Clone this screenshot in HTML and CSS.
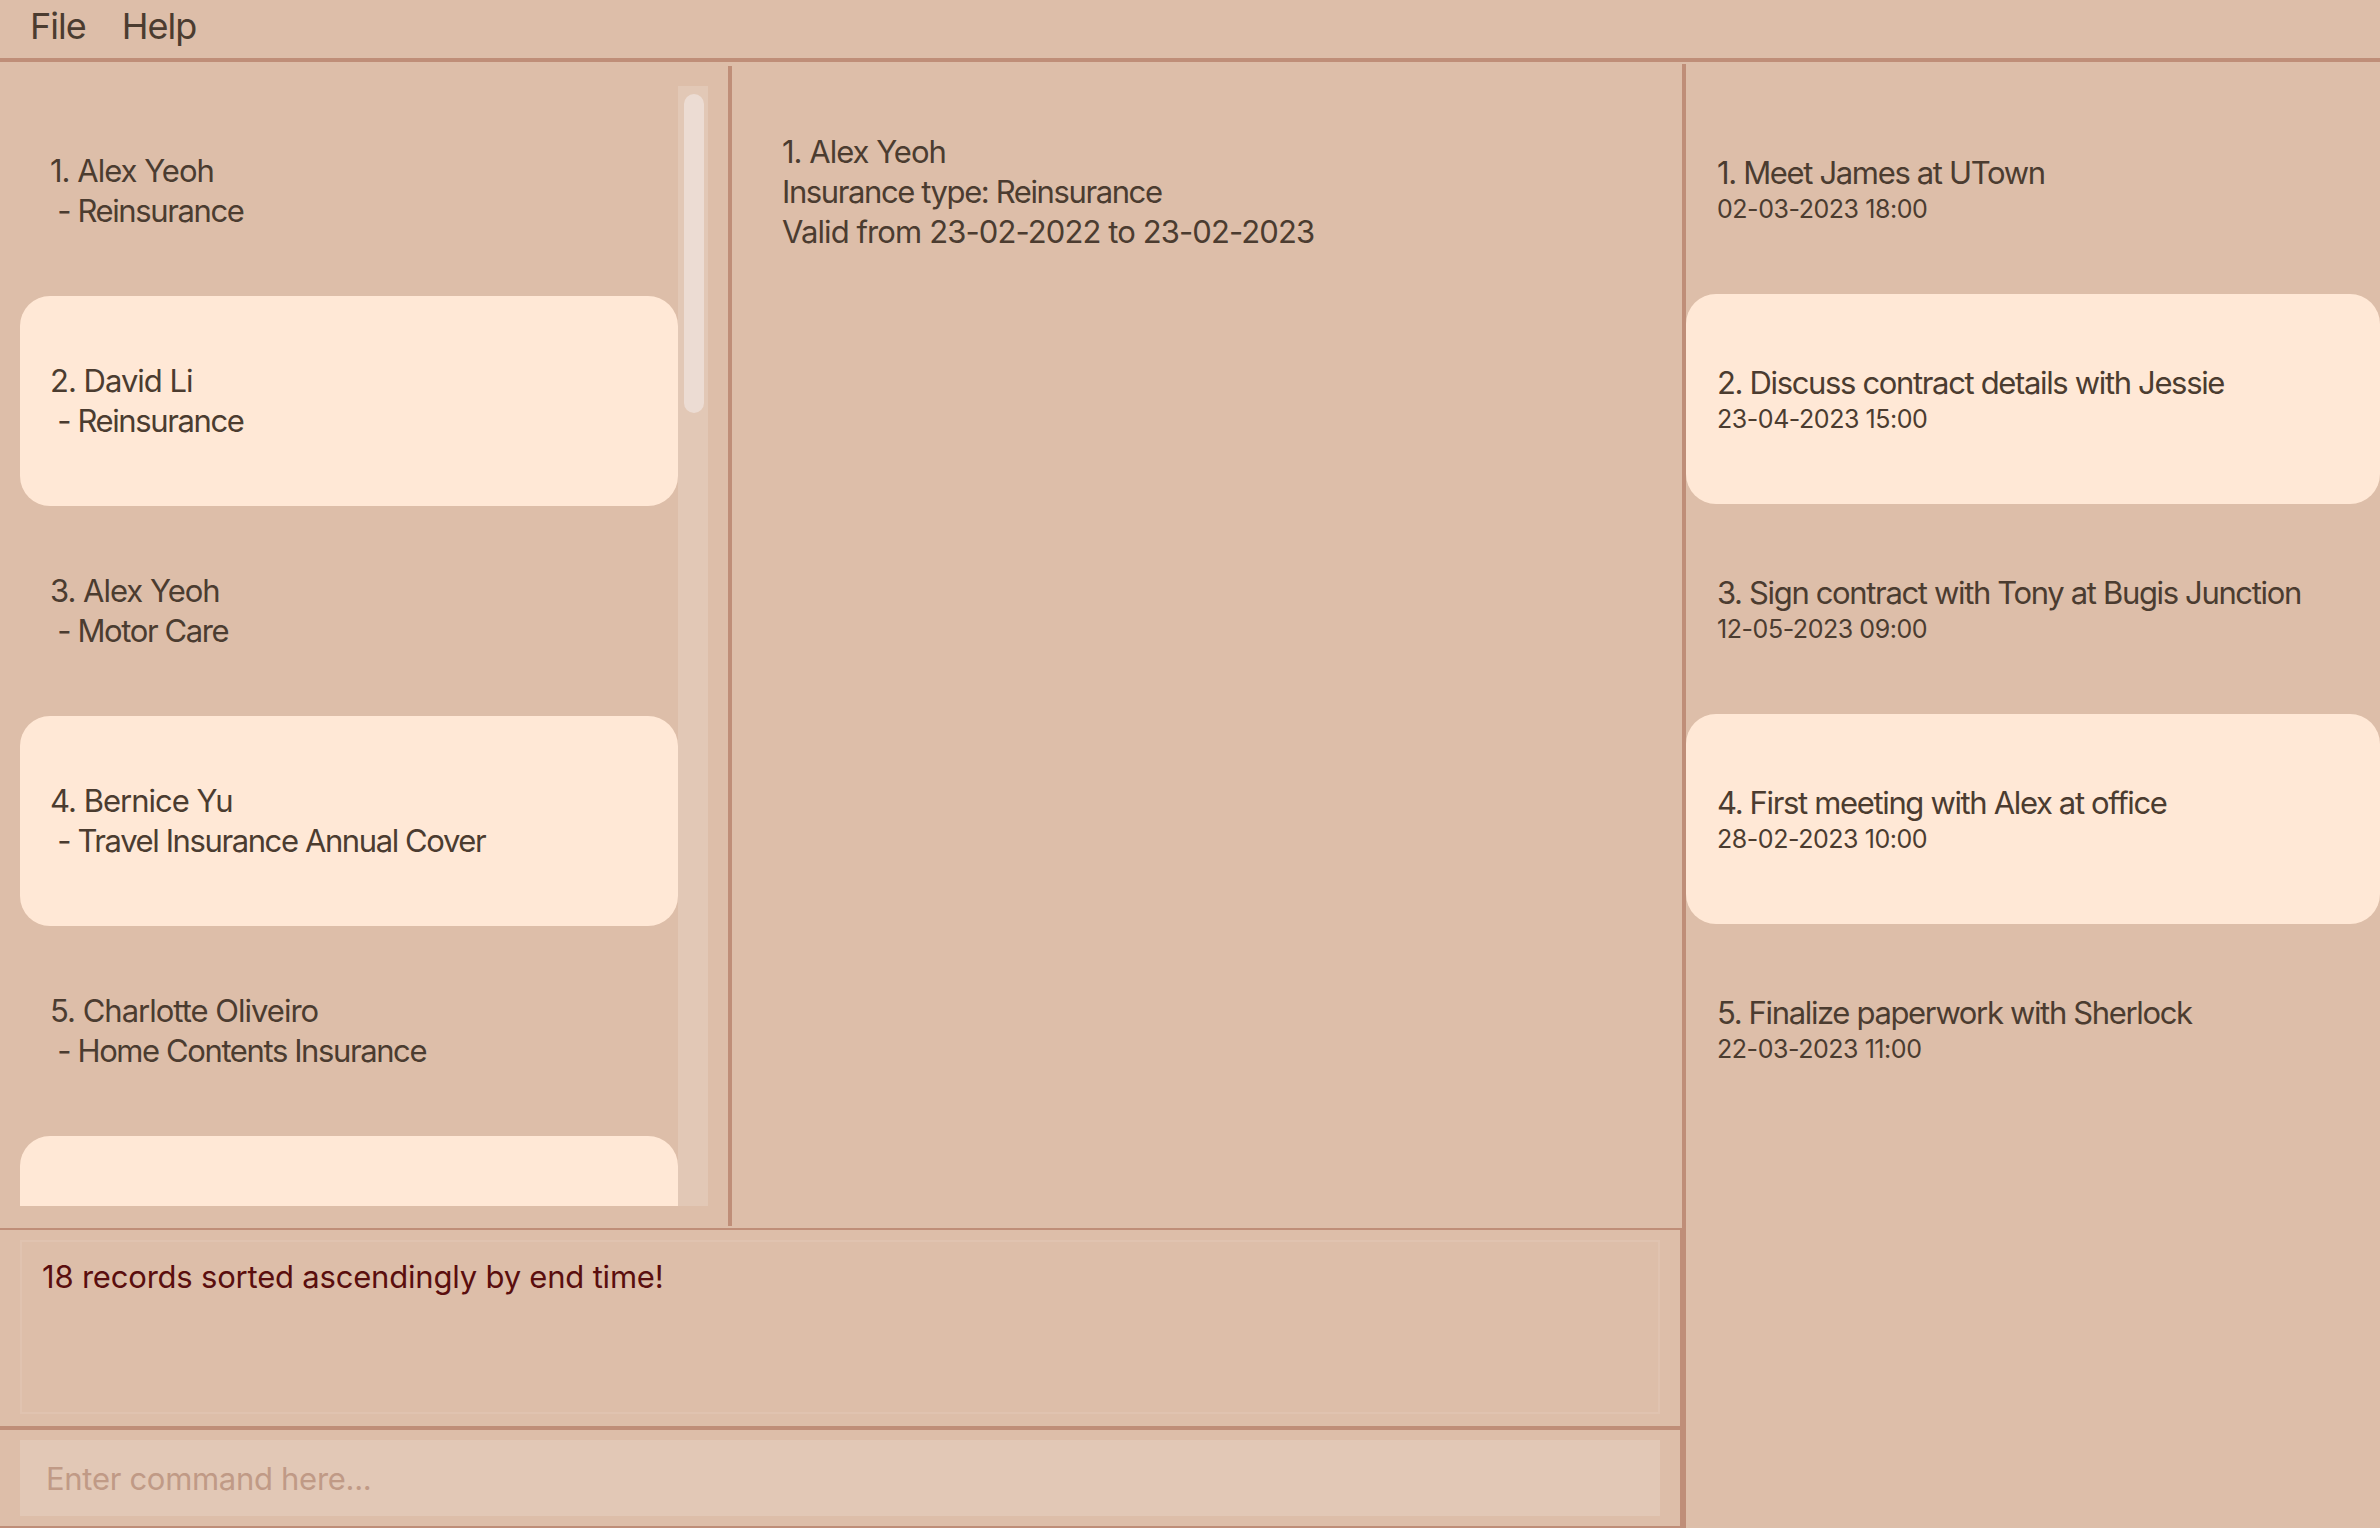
FILE: index.html
```html
<!DOCTYPE html>
<html lang="en">
<head>
<meta charset="utf-8">
<title>Insurance Manager</title>
<link rel="stylesheet" href="styles.css">
</head>
<body>
<div class="app">
  <div class="menubar">
    <span class="menu-item">File</span>
    <span class="menu-item">Help</span>
  </div>
  <div class="main">
    <div class="left-col">
      <div class="top-split">
        <div class="person-pane">
          <div class="list-viewport">
            <div class="person-list">
              <div class="card">
                <div class="line name">1. Alex Yeoh</div>
                <div class="line sub"> - Reinsurance</div>
              </div>
              <div class="card alt">
                <div class="line name">2. David Li</div>
                <div class="line sub"> - Reinsurance</div>
              </div>
              <div class="card">
                <div class="line name">3. Alex Yeoh</div>
                <div class="line sub"> - Motor Care</div>
              </div>
              <div class="card alt">
                <div class="line name">4. Bernice Yu</div>
                <div class="line sub"> - Travel Insurance Annual Cover</div>
              </div>
              <div class="card">
                <div class="line name">5. Charlotte Oliveiro</div>
                <div class="line sub"> - Home Contents Insurance</div>
              </div>
              <div class="card alt"></div>
            </div>
            <div class="scroll-track">
              <div class="scroll-thumb"></div>
            </div>
          </div>
        </div>
        <div class="divider-left"></div>
        <div class="detail-pane">
          <div class="line name">1. Alex Yeoh</div>
          <div class="line">Insurance type: Reinsurance</div>
          <div class="line dates">Valid from 23-02-2022 to 23-02-2023</div>
        </div>
      </div>
      <div class="result">
        <div class="result-box">18 records sorted ascendingly by end time!</div>
      </div>
      <div class="command">
        <input class="command-input" type="text" placeholder="Enter command here...">
      </div>
    </div>
    <div class="divider-right"></div>
    <div class="event-pane">
      <div class="event">
        <div class="event-title">1. Meet James at UTown</div>
        <div class="event-date">02-03-2023 18:00</div>
      </div>
      <div class="event alt">
        <div class="event-title">2. Discuss contract details with Jessie</div>
        <div class="event-date">23-04-2023 15:00</div>
      </div>
      <div class="event">
        <div class="event-title">3. Sign contract with Tony at Bugis Junction</div>
        <div class="event-date">12-05-2023 09:00</div>
      </div>
      <div class="event alt">
        <div class="event-title">4. First meeting with Alex at office</div>
        <div class="event-date">28-02-2023 10:00</div>
      </div>
      <div class="event">
        <div class="event-title">5. Finalize paperwork with Sherlock</div>
        <div class="event-date">22-03-2023 11:00</div>
      </div>
    </div>
  </div>
</div>
</body>
</html>
```
FILE: styles.css
```css
html, body {
  margin: 0;
  padding: 0;
}
body {
  background: #ddbea9;
  font-family: Inter, "Noto Sans", sans-serif;
  color: #4b3c30;
  width: 2380px;
  height: 1528px;
  overflow: hidden;
}
.app {
  display: flex;
  flex-direction: column;
  height: 1528px;
}
.menubar {
  height: 58px;
  border-bottom: 4px solid #bf8e78;
  display: flex;
  align-items: flex-start;
  gap: 36px;
  padding-left: 30px;
}
.menu-item {
  font-size: 36px;
  line-height: 52px;
  letter-spacing: -1px;
}
.main {
  display: flex;
  height: 1466px;
}
.left-col {
  width: 1682px;
  display: flex;
  flex-direction: column;
}
.top-split {
  height: 1166px;
  display: flex;
}
.person-pane {
  width: 728px;
  padding: 24px 20px 0 20px;
  box-sizing: border-box;
}
.list-viewport {
  height: 1120px;
  display: flex;
  overflow: hidden;
}
.person-list {
  width: 658px;
  flex: none;
}
.card {
  height: 210px;
  border-radius: 30px;
  padding-left: 30px;
  display: flex;
  flex-direction: column;
  justify-content: center;
  box-sizing: border-box;
}
.alt {
  background: #ffe8d6;
}
.line {
  font-size: 31px;
  line-height: 40px;
  letter-spacing: -1.4px;
  white-space: pre;
}
.line.name {
  letter-spacing: -1px;
}
.line.dates {
  letter-spacing: -0.9px;
}
.scroll-track {
  width: 30px;
  flex: none;
  height: 1120px;
  background: #e2c8b6;
  padding: 8px 4px 0 6px;
  box-sizing: border-box;
}
.scroll-thumb {
  height: 319px;
  border-radius: 10px;
  background: #ecdcd3;
}
.divider-left {
  width: 4px;
  margin-top: 4px;
  margin-bottom: 2px;
  background: #bf8e78;
}
.detail-pane {
  flex: 1;
  padding: 70px 0 0 50px;
}
.result {
  border-top: 2px solid #bf8e78;
  border-right: 2px solid #bf8e78;
  padding: 10px 20px 12px 20px;
  height: 174px;
}
.result-box {
  height: 174px;
  box-sizing: border-box;
  border: 2px solid #e0c3b0;
  padding: 15px 20px;
  font-size: 31px;
  line-height: 40px;
  letter-spacing: -0.2px;
  color: #5a0e0e;
}
.command {
  border-top: 4px solid #bf8e78;
  border-bottom: 2px solid #bf8e78;
  border-right: 2px solid #bf8e78;
  padding: 10px 20px;
  flex: 1;
}
.command-input {
  display: block;
  width: 100%;
  height: 76px;
  box-sizing: border-box;
  border: none;
  outline: none;
  background: #e2c8b6;
  padding: 0 26px;
  font-family: Inter, "Noto Sans", sans-serif;
  font-size: 31px;
  letter-spacing: -0.3px;
  color: #4b3c30;
}
.command-input::placeholder {
  color: #c09a86;
}
.divider-right {
  width: 4px;
  margin-top: 2px;
  background: #bf8e78;
}
.event-pane {
  flex: 1;
  padding-top: 22px;
}
.event {
  height: 210px;
  border-radius: 30px;
  padding-left: 31px;
  display: flex;
  flex-direction: column;
  justify-content: center;
  box-sizing: border-box;
}
.event-title {
  font-size: 31px;
  line-height: 40px;
  letter-spacing: -1.35px;
}
.event-date {
  font-size: 25px;
  line-height: 32px;
  letter-spacing: -0.45px;
}
```
